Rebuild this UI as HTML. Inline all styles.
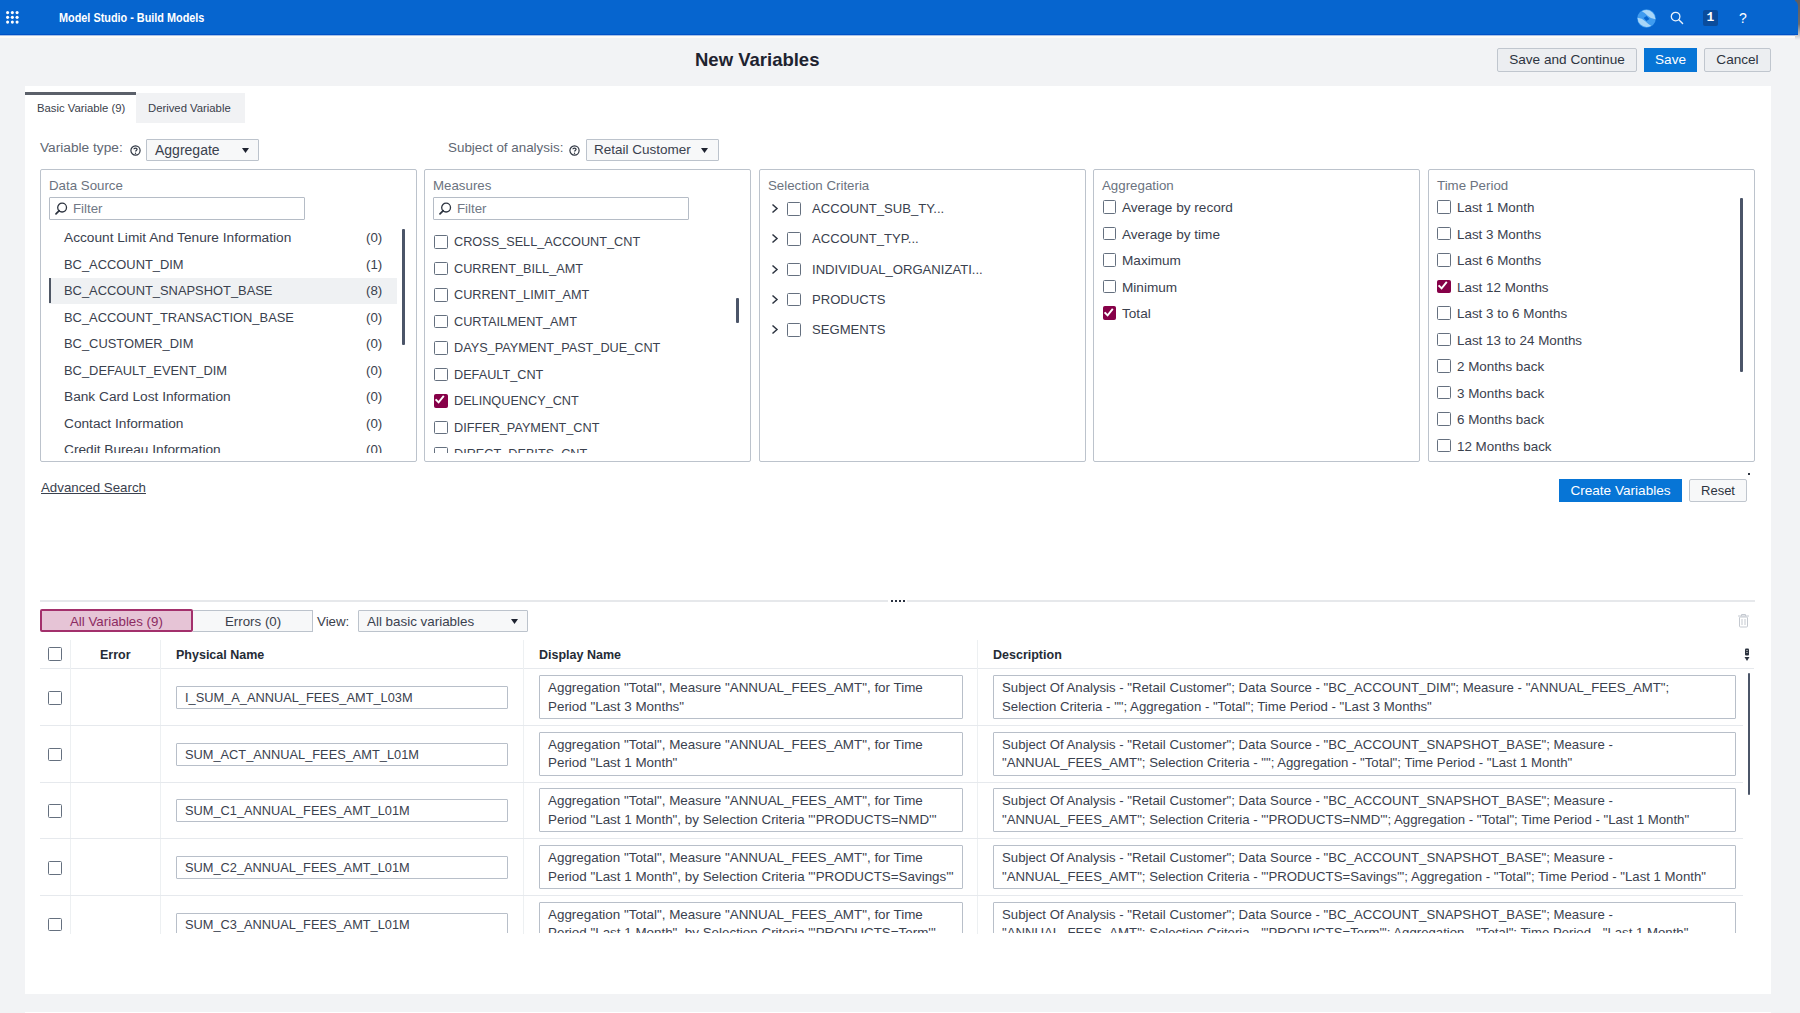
<!DOCTYPE html>
<html><head><meta charset="utf-8"><style>
*{box-sizing:border-box;margin:0;padding:0}
html,body{width:1800px;height:1013px;overflow:hidden}
body{position:relative;background:#f2f3f5;font-family:"Liberation Sans",sans-serif;font-size:13.3px;color:#3a414e}
.a{position:absolute;white-space:nowrap}
.btn{position:absolute;height:24px;border:1px solid #c0c6ce;background:#eceef1;border-radius:2px;font-size:13.6px;color:#2d3440;text-align:center;line-height:22px;white-space:nowrap}
.btnp{background:#0775d6;border-color:#0775d6;color:#fff;border-radius:0}
.box{position:absolute;top:169px;height:293px;border:1px solid #bcc3cc;border-radius:2px;background:#fff}
.clip{position:absolute;left:0;top:0;right:0;overflow:hidden}
.lbl{position:absolute;left:8px;top:8px;color:#6b7380;font-size:13.3px;white-space:nowrap}
.flt{position:absolute;left:8px;top:27px;width:256px;height:23px;border:1px solid #b5bcc6;border-radius:1px}
.flt span{position:absolute;left:23px;top:3px;color:#707885}
.cb{position:absolute;width:13.5px;height:13.5px;border:1.5px solid #65707f;border-radius:1.5px;background:#fff}
.cbx{background:#860048;border-color:#860048}
.sel{position:absolute;height:23px;border:1px solid #bcc3cc;background:#f7f8f9;border-radius:1px;white-space:nowrap}
.t{position:absolute;white-space:nowrap}
.inp{position:absolute;border:1px solid #b8bfc9;border-radius:1px;background:#fff;white-space:normal;line-height:18.6px;padding:3px 8px;color:#3a414e}
.hl{position:absolute;background:#e6e9ed}
</style></head><body>
<div class="a" style="left:0;top:0;width:1800px;height:35px;background:#0665cf;border-bottom:1px solid #0052c6"></div>
<div class="a" style="left:0;top:35px;width:1800px;height:1px;background:#a8c2e6"></div>
<div class="a" style="left:0;top:36px;width:1800px;height:1.5px;background:#fdfbf7"></div>
<svg class="a" style="left:6.4px;top:11.2px" width="14" height="14" viewBox="0 0 14 14"><circle cx="1.6" cy="1.6" r="1.55" fill="#fff"/><circle cx="6.35" cy="1.6" r="1.55" fill="#fff"/><circle cx="11.1" cy="1.6" r="1.55" fill="#fff"/><circle cx="1.6" cy="6.35" r="1.55" fill="#fff"/><circle cx="6.35" cy="6.35" r="1.55" fill="#fff"/><circle cx="11.1" cy="6.35" r="1.55" fill="#fff"/><circle cx="1.6" cy="11.1" r="1.55" fill="#fff"/><circle cx="6.35" cy="11.1" r="1.55" fill="#fff"/><circle cx="11.1" cy="11.1" r="1.55" fill="#fff"/></svg>
<div class="a" style="left:59px;top:11px;color:#fff;font-weight:bold;font-size:12px;transform:scaleX(0.905);transform-origin:0 0">Model Studio - Build Models</div>
<svg class="a" style="left:1636.6px;top:8.5px" width="19" height="19" viewBox="0 0 18 18">
<circle cx="9" cy="9" r="8.8" fill="#3f9bef"/>
<path d="M4.6 2.2 Q10 -0.6 14.6 3.2 Q17.6 6 17.4 9.6 Q13.2 9.4 10.4 6.6 Q7.8 3.8 4.6 2.2Z" fill="#a8d6f8"/>
<path d="M13.4 15.8 Q8 18.6 3.4 14.8 Q0.4 12 0.6 8.4 Q4.8 8.6 7.6 11.4 Q10.2 14.2 13.4 15.8Z" fill="#a8d6f8"/>
<path d="M6.2 8.6 L9 6.6 L11.8 9.4 L9 11.4Z" fill="#0665cf"/>
</svg>
<svg class="a" style="left:1670px;top:11px" width="14" height="14" viewBox="0 0 14 14">
<circle cx="5.6" cy="5.6" r="4.3" fill="none" stroke="#e8f1fb" stroke-width="1.3"/>
<path d="M8.8 8.8 L12.6 12.6" stroke="#e8f1fb" stroke-width="1.4" stroke-linecap="round"/></svg>
<div class="a" style="left:1703px;top:10px;width:15px;height:16px;background:#0a4c9c;border-radius:2px;color:#fff;font-family:'Liberation Mono',monospace;font-weight:bold;font-size:13px;line-height:16px;text-align:center">1</div>
<div class="a" style="left:1739px;top:10px;color:#fff;font-size:14px">?</div>
<div class="a" style="left:1795px;top:0;width:5px;height:40px;background:linear-gradient(#5d5d60 0,#6a6a6e 60%,#f2f3f5 100%)"></div>
<div class="a" style="left:1788px;top:0;width:10px;height:35px;background:#0665cf;border-top-right-radius:6px;border-bottom:1px solid #0052c6"></div>
<div class="a" style="left:695px;top:49px;font-size:18.5px;font-weight:bold;color:#1e2330">New Variables</div>
<div class="btn" style="left:1497px;top:48px;width:140px">Save and Continue</div>
<div class="btn btnp" style="left:1644px;top:48px;width:53px">Save</div>
<div class="btn" style="left:1704px;top:48px;width:67px">Cancel</div>
<div class="a" style="left:25px;top:86px;width:1746px;height:908px;background:#fff"></div>
<div class="a" style="left:25px;top:1012px;width:1746px;height:1px;background:#fff"></div>
<div class="a" style="left:25px;top:92px;width:111px;height:3px;background:#5b606a"></div>
<div class="a" style="left:37px;top:102px;font-size:11.3px;color:#3a404b">Basic Variable (9)</div>
<div class="a" style="left:136px;top:93px;width:109px;height:30px;background:#f1f2f4"></div>
<div class="a" style="left:148px;top:102px;font-size:11.3px;color:#3a404b">Derived Variable</div>
<div class="a" style="left:40px;top:140px;font-size:13.7px;color:#5f6773">Variable type:</div>
<svg class="a" style="left:130px;top:144.5px" width="11" height="11" viewBox="0 0 11 11"><circle cx="5.5" cy="5.5" r="4.6" fill="none" stroke="#2d3440" stroke-width="1.2"/><path d="M3.9 4.3 C3.9 2.6,7.1 2.6,7.1 4.3 C7.1 5.4,5.5 5.5,5.5 6.6" fill="none" stroke="#2d3440" stroke-width="1.2"/><circle cx="5.5" cy="8.2" r="0.7" fill="#2d3440"/></svg>
<div class="sel" style="left:146px;top:139px;width:113px;height:22px"><span class="t" style="left:8px;top:2px;font-size:14px">Aggregate</span><svg class="t" style="left:95px;top:8px" width="7" height="5" viewBox="0 0 7 5"><path d="M0 0H7L3.5 5Z" fill="#1e2330"/></svg></div>
<div class="a" style="left:448px;top:140px;font-size:13.4px;color:#5f6773">Subject of analysis:</div>
<svg class="a" style="left:569px;top:144.5px" width="11" height="11" viewBox="0 0 11 11"><circle cx="5.5" cy="5.5" r="4.6" fill="none" stroke="#2d3440" stroke-width="1.2"/><path d="M3.9 4.3 C3.9 2.6,7.1 2.6,7.1 4.3 C7.1 5.4,5.5 5.5,5.5 6.6" fill="none" stroke="#2d3440" stroke-width="1.2"/><circle cx="5.5" cy="8.2" r="0.7" fill="#2d3440"/></svg>
<div class="sel" style="left:586px;top:139px;width:133px;height:22px"><span class="t" style="left:7px;top:2px;font-size:13.5px">Retail Customer</span><svg class="t" style="left:114px;top:8px" width="7" height="5" viewBox="0 0 7 5"><path d="M0 0H7L3.5 5Z" fill="#1e2330"/></svg></div>
<div class="box" style="left:40px;width:377px">
<div class="lbl">Data Source</div>
<div class="flt"><span>Filter</span></div>
<svg class="a" style="left:14px;top:32px" width="14" height="14" viewBox="0 0 14 14"><circle cx="7.1" cy="5.6" r="4.4" fill="none" stroke="#2d3440" stroke-width="1.3"/><path d="M4.2 8.6 L1 11.9" stroke="#2d3440" stroke-width="1.7" stroke-linecap="round"/></svg>
<div class="clip" style="top:52px;height:231px;">
<div class="t" style="left:23px;top:8.0px;font-size:13.7px">Account Limit And Tenure Information</div>
<div class="t" style="left:325px;top:8.0px">(0)</div>
<div class="t" style="left:23px;top:34.5px;font-size:12.9px">BC_ACCOUNT_DIM</div>
<div class="t" style="left:325px;top:34.5px">(1)</div>
<div class="a" style="left:8px;top:56.0px;width:348px;height:26px;background:#eff1f3"></div>
<div class="a" style="left:8px;top:56.0px;width:1.6px;height:25px;background:#4f5765"></div>
<div class="t" style="left:23px;top:61.0px;font-size:12.9px">BC_ACCOUNT_SNAPSHOT_BASE</div>
<div class="t" style="left:325px;top:61.0px">(8)</div>
<div class="t" style="left:23px;top:87.5px;font-size:12.9px">BC_ACCOUNT_TRANSACTION_BASE</div>
<div class="t" style="left:325px;top:87.5px">(0)</div>
<div class="t" style="left:23px;top:114.0px;font-size:12.9px">BC_CUSTOMER_DIM</div>
<div class="t" style="left:325px;top:114.0px">(0)</div>
<div class="t" style="left:23px;top:140.5px;font-size:12.9px">BC_DEFAULT_EVENT_DIM</div>
<div class="t" style="left:325px;top:140.5px">(0)</div>
<div class="t" style="left:23px;top:167.0px;font-size:13.7px">Bank Card Lost Information</div>
<div class="t" style="left:325px;top:167.0px">(0)</div>
<div class="t" style="left:23px;top:193.5px;font-size:13.7px">Contact Information</div>
<div class="t" style="left:325px;top:193.5px">(0)</div>
<div class="t" style="left:23px;top:220.0px;font-size:13.7px">Credit Bureau Information</div>
<div class="t" style="left:325px;top:220.0px">(0)</div>
</div>
<div class="a" style="left:361px;top:59px;width:2.6px;height:116px;background:#4b5568;border-radius:1px"></div>
</div>
<div class="box" style="left:424px;width:327px">
<div class="lbl">Measures</div>
<div class="flt"><span>Filter</span></div>
<svg class="a" style="left:14px;top:32px" width="14" height="14" viewBox="0 0 14 14"><circle cx="7.1" cy="5.6" r="4.4" fill="none" stroke="#2d3440" stroke-width="1.3"/><path d="M4.2 8.6 L1 11.9" stroke="#2d3440" stroke-width="1.7" stroke-linecap="round"/></svg>
<div class="clip" style="top:52px;height:231px;">
<div class="cb" style="left:9px;top:13.0px"></div>
<div class="t" style="left:29px;top:13.0px;font-size:12.7px">CROSS_SELL_ACCOUNT_CNT</div>
<div class="cb" style="left:9px;top:39.5px"></div>
<div class="t" style="left:29px;top:39.5px;font-size:12.7px">CURRENT_BILL_AMT</div>
<div class="cb" style="left:9px;top:66.0px"></div>
<div class="t" style="left:29px;top:66.0px;font-size:12.7px">CURRENT_LIMIT_AMT</div>
<div class="cb" style="left:9px;top:92.5px"></div>
<div class="t" style="left:29px;top:92.5px;font-size:12.7px">CURTAILMENT_AMT</div>
<div class="cb" style="left:9px;top:119.0px"></div>
<div class="t" style="left:29px;top:119.0px;font-size:12.7px">DAYS_PAYMENT_PAST_DUE_CNT</div>
<div class="cb" style="left:9px;top:145.5px"></div>
<div class="t" style="left:29px;top:145.5px;font-size:12.7px">DEFAULT_CNT</div>
<div class="cb cbx" style="left:9px;top:172.0px"><svg width="13.5" height="13.5" viewBox="0 0 13.5 13.5" style="position:absolute;left:-1.6px;top:-1.6px"><path d="M3.2 7.0 L5.6 9.4 L10.2 3.6" fill="none" stroke="#fff" stroke-width="1.9" stroke-linecap="square"/></svg></div>
<div class="t" style="left:29px;top:172.0px;font-size:12.7px">DELINQUENCY_CNT</div>
<div class="cb" style="left:9px;top:198.5px"></div>
<div class="t" style="left:29px;top:198.5px;font-size:12.7px">DIFFER_PAYMENT_CNT</div>
<div class="cb" style="left:9px;top:225.0px"></div>
<div class="t" style="left:29px;top:225.0px;font-size:12.7px">DIRECT_DEBITS_CNT</div>
</div>
<div class="a" style="left:311px;top:128px;width:3px;height:25px;background:#4b5568;border-radius:1px"></div>
</div>
<div class="box" style="left:759px;width:327px">
<div class="lbl">Selection Criteria</div>
<svg class="a" style="left:11px;top:33.2px" width="8" height="11" viewBox="0 0 8 11"><path d="M1.5 1.5 L6 5.5 L1.5 9.5" fill="none" stroke="#2d3440" stroke-width="1.5"/></svg>
<div class="cb" style="left:27px;top:32.2px"></div>
<div class="t" style="left:52px;top:31.200000000000003px;font-size:13.1px">ACCOUNT_SUB_TY...</div>
<svg class="a" style="left:11px;top:63.400000000000006px" width="8" height="11" viewBox="0 0 8 11"><path d="M1.5 1.5 L6 5.5 L1.5 9.5" fill="none" stroke="#2d3440" stroke-width="1.5"/></svg>
<div class="cb" style="left:27px;top:62.400000000000006px"></div>
<div class="t" style="left:52px;top:61.400000000000006px;font-size:13.1px">ACCOUNT_TYP...</div>
<svg class="a" style="left:11px;top:93.6px" width="8" height="11" viewBox="0 0 8 11"><path d="M1.5 1.5 L6 5.5 L1.5 9.5" fill="none" stroke="#2d3440" stroke-width="1.5"/></svg>
<div class="cb" style="left:27px;top:92.6px"></div>
<div class="t" style="left:52px;top:91.6px;font-size:13.1px">INDIVIDUAL_ORGANIZATI...</div>
<svg class="a" style="left:11px;top:123.8px" width="8" height="11" viewBox="0 0 8 11"><path d="M1.5 1.5 L6 5.5 L1.5 9.5" fill="none" stroke="#2d3440" stroke-width="1.5"/></svg>
<div class="cb" style="left:27px;top:122.8px"></div>
<div class="t" style="left:52px;top:121.8px;font-size:13.1px">PRODUCTS</div>
<svg class="a" style="left:11px;top:154.0px" width="8" height="11" viewBox="0 0 8 11"><path d="M1.5 1.5 L6 5.5 L1.5 9.5" fill="none" stroke="#2d3440" stroke-width="1.5"/></svg>
<div class="cb" style="left:27px;top:153.0px"></div>
<div class="t" style="left:52px;top:152.0px;font-size:13.1px">SEGMENTS</div>
</div>
<div class="box" style="left:1093px;width:327px">
<div class="lbl">Aggregation</div>
<div class="cb" style="left:8.6px;top:30.2px"></div>
<div class="t" style="left:28px;top:30.0px;font-size:13.6px">Average by record</div>
<div class="cb" style="left:8.6px;top:56.7px"></div>
<div class="t" style="left:28px;top:56.5px;font-size:13.6px">Average by time</div>
<div class="cb" style="left:8.6px;top:83.2px"></div>
<div class="t" style="left:28px;top:83.0px;font-size:13.6px">Maximum</div>
<div class="cb" style="left:8.6px;top:109.7px"></div>
<div class="t" style="left:28px;top:109.5px;font-size:13.6px">Minimum</div>
<div class="cb cbx" style="left:8.6px;top:136.2px"><svg width="13.5" height="13.5" viewBox="0 0 13.5 13.5" style="position:absolute;left:-1.6px;top:-1.6px"><path d="M3.2 7.0 L5.6 9.4 L10.2 3.6" fill="none" stroke="#fff" stroke-width="1.9" stroke-linecap="square"/></svg></div>
<div class="t" style="left:28px;top:136.0px;font-size:13.6px">Total</div>
</div>
<div class="box" style="left:1428px;width:327px">
<div class="lbl">Time Period</div>
<div class="cb" style="left:8px;top:30.2px"></div>
<div class="t" style="left:28px;top:30.0px;font-size:13.4px">Last 1 Month</div>
<div class="cb" style="left:8px;top:56.7px"></div>
<div class="t" style="left:28px;top:56.5px;font-size:13.4px">Last 3 Months</div>
<div class="cb" style="left:8px;top:83.2px"></div>
<div class="t" style="left:28px;top:83.0px;font-size:13.4px">Last 6 Months</div>
<div class="cb cbx" style="left:8px;top:109.7px"><svg width="13.5" height="13.5" viewBox="0 0 13.5 13.5" style="position:absolute;left:-1.6px;top:-1.6px"><path d="M3.2 7.0 L5.6 9.4 L10.2 3.6" fill="none" stroke="#fff" stroke-width="1.9" stroke-linecap="square"/></svg></div>
<div class="t" style="left:28px;top:109.5px;font-size:13.4px">Last 12 Months</div>
<div class="cb" style="left:8px;top:136.2px"></div>
<div class="t" style="left:28px;top:136.0px;font-size:13.4px">Last 3 to 6 Months</div>
<div class="cb" style="left:8px;top:162.7px"></div>
<div class="t" style="left:28px;top:162.5px;font-size:13.4px">Last 13 to 24 Months</div>
<div class="cb" style="left:8px;top:189.2px"></div>
<div class="t" style="left:28px;top:189.0px;font-size:13.4px">2 Months back</div>
<div class="cb" style="left:8px;top:215.7px"></div>
<div class="t" style="left:28px;top:215.5px;font-size:13.4px">3 Months back</div>
<div class="cb" style="left:8px;top:242.2px"></div>
<div class="t" style="left:28px;top:242.0px;font-size:13.4px">6 Months back</div>
<div class="cb" style="left:8px;top:268.7px"></div>
<div class="t" style="left:28px;top:268.5px;font-size:13.4px">12 Months back</div>
<div class="a" style="left:311px;top:28px;width:3px;height:174px;background:#4b5568;border-radius:1px"></div>
</div>
<div class="a" style="left:41px;top:480px;font-size:13.3px;text-decoration:underline;color:#3a414e">Advanced Search</div>
<div class="btn btnp" style="left:1559px;top:479px;width:123px;height:23px;line-height:22px">Create Variables</div>
<div class="btn" style="left:1689px;top:479px;width:58px;height:23px;background:#f7f8f9;font-size:13px;line-height:22px">Reset</div>
<div class="a" style="left:1748px;top:473px;width:2px;height:2px;background:#2d3440"></div>
<div class="a" style="left:40px;top:600px;width:1715px;height:2px;background:#e6e8eb"></div>
<div class="a" style="left:888px;top:599px;width:19px;height:4px;background:#fff"></div>
<div class="a" style="left:891px;top:600px;width:2px;height:2px;background:#2a3140"></div>
<div class="a" style="left:895px;top:600px;width:2px;height:2px;background:#2a3140"></div>
<div class="a" style="left:899px;top:600px;width:2px;height:2px;background:#2a3140"></div>
<div class="a" style="left:903px;top:600px;width:2px;height:2px;background:#2a3140"></div>
<div class="a" style="left:40px;top:609px;width:153px;height:23px;background:#e6c4d6;border:2px solid #a3306c;border-radius:2px"></div>
<div class="a" style="left:70px;top:613.5px;font-size:13.3px;color:#8c2b61">All Variables (9)</div>
<div class="a" style="left:193px;top:610px;width:120px;height:22px;background:#f7f8f9;border:1px solid #bcc3cc;border-left:none"></div>
<div class="a" style="left:225px;top:613.5px;font-size:13.3px;color:#3a404b">Errors (0)</div>
<div class="a" style="left:317px;top:613.5px;font-size:13.3px;color:#3a404b">View:</div>
<div class="sel" style="left:358px;top:610px;width:170px;height:22px"><span class="t" style="left:8px;top:3px;font-size:13.4px">All basic variables</span><svg class="t" style="left:152px;top:8px" width="7" height="5" viewBox="0 0 7 5"><path d="M0 0H7L3.5 5Z" fill="#1e2330"/></svg></div>
<svg class="a" style="left:1737px;top:613px" width="13" height="15" viewBox="0 0 13 15">
<path d="M1 3 H12 M4.5 3 V1.5 H8.5 V3" fill="none" stroke="#c4c9d0" stroke-width="1"/>
<rect x="2.5" y="4" width="8" height="10" rx="1" fill="none" stroke="#c4c9d0" stroke-width="1"/>
<path d="M5 6 V12 M8 6 V12" stroke="#c4c9d0" stroke-width="1"/></svg>
<div class="hl" style="left:40px;top:668px;width:1714px;height:1px"></div>
<div class="hl" style="left:70px;top:640px;width:1px;height:294px;background:#edf0f2"></div>
<div class="hl" style="left:160px;top:640px;width:1px;height:294px;background:#edf0f2"></div>
<div class="hl" style="left:523px;top:640px;width:1px;height:294px;background:#edf0f2"></div>
<div class="hl" style="left:977px;top:640px;width:1px;height:294px;background:#edf0f2"></div>
<div class="cb" style="left:48px;top:647px"></div>
<div class="a" style="left:100px;top:647.5px;font-weight:bold;font-size:12.5px;color:#252b36">Error</div>
<div class="a" style="left:176px;top:647.5px;font-weight:bold;font-size:12.5px;color:#252b36">Physical Name</div>
<div class="a" style="left:539px;top:647.5px;font-weight:bold;font-size:12.5px;color:#252b36">Display Name</div>
<div class="a" style="left:993px;top:647.5px;font-weight:bold;font-size:12.5px;color:#252b36">Description</div>
<svg class="a" style="left:1744px;top:648px" width="6" height="14" viewBox="0 0 6 14">
<rect x="1" y="0.5" width="4" height="7" rx="1" fill="#2d3440"/><path d="M2 2.5 H4 M2 4.5 H4" stroke="#ccc" stroke-width="0.6"/>
<path d="M0.5 9 L5.5 9 L3 13Z" fill="#2d3440"/></svg>
<div class="a" style="left:40px;top:669px;width:1715px;height:264px;overflow:hidden">
<div class="hl" style="left:0;top:56.0px;width:1703px;height:1px"></div>
<div class="cb" style="left:8px;top:22.0px"></div>
<div class="inp" style="left:136px;top:17.0px;width:332px;height:23px;padding:2px 8px;font-size:12.8px;white-space:nowrap">I_SUM_A_ANNUAL_FEES_AMT_L03M</div>
<div class="inp" style="left:499px;top:6.0px;width:424px;height:44px;font-size:13.4px">Aggregation &quot;Total&quot;, Measure &quot;ANNUAL_FEES_AMT&quot;, for Time<br>Period &quot;Last 3 Months&quot;</div>
<div class="inp" style="left:953px;top:6.0px;width:743px;height:44px;font-size:13.2px;white-space:nowrap">Subject Of Analysis - &quot;Retail Customer&quot;; Data Source - &quot;BC_ACCOUNT_DIM&quot;; Measure - &quot;ANNUAL_FEES_AMT&quot;;<br>Selection Criteria - &quot;&quot;; Aggregation - &quot;Total&quot;; Time Period - &quot;Last 3 Months&quot;</div>
<div class="hl" style="left:0;top:112.7px;width:1703px;height:1px"></div>
<div class="cb" style="left:8px;top:78.7px"></div>
<div class="inp" style="left:136px;top:73.7px;width:332px;height:23px;padding:2px 8px;font-size:12.8px;white-space:nowrap">SUM_ACT_ANNUAL_FEES_AMT_L01M</div>
<div class="inp" style="left:499px;top:62.7px;width:424px;height:44px;font-size:13.4px">Aggregation &quot;Total&quot;, Measure &quot;ANNUAL_FEES_AMT&quot;, for Time<br>Period &quot;Last 1 Month&quot;</div>
<div class="inp" style="left:953px;top:62.7px;width:743px;height:44px;font-size:13.2px;white-space:nowrap">Subject Of Analysis - &quot;Retail Customer&quot;; Data Source - &quot;BC_ACCOUNT_SNAPSHOT_BASE&quot;; Measure -<br>&quot;ANNUAL_FEES_AMT&quot;; Selection Criteria - &quot;&quot;; Aggregation - &quot;Total&quot;; Time Period - &quot;Last 1 Month&quot;</div>
<div class="hl" style="left:0;top:169.4px;width:1703px;height:1px"></div>
<div class="cb" style="left:8px;top:135.4px"></div>
<div class="inp" style="left:136px;top:130.4px;width:332px;height:23px;padding:2px 8px;font-size:12.8px;white-space:nowrap">SUM_C1_ANNUAL_FEES_AMT_L01M</div>
<div class="inp" style="left:499px;top:119.4px;width:424px;height:44px;font-size:13.4px">Aggregation &quot;Total&quot;, Measure &quot;ANNUAL_FEES_AMT&quot;, for Time<br>Period &quot;Last 1 Month&quot;, by Selection Criteria &quot;&#x27;PRODUCTS=NMD&#x27;&quot;</div>
<div class="inp" style="left:953px;top:119.4px;width:743px;height:44px;font-size:13.2px;white-space:nowrap">Subject Of Analysis - &quot;Retail Customer&quot;; Data Source - &quot;BC_ACCOUNT_SNAPSHOT_BASE&quot;; Measure -<br>&quot;ANNUAL_FEES_AMT&quot;; Selection Criteria - &quot;'PRODUCTS=NMD'&quot;; Aggregation - &quot;Total&quot;; Time Period - &quot;Last 1 Month&quot;</div>
<div class="hl" style="left:0;top:226.10000000000002px;width:1703px;height:1px"></div>
<div class="cb" style="left:8px;top:192.10000000000002px"></div>
<div class="inp" style="left:136px;top:187.10000000000002px;width:332px;height:23px;padding:2px 8px;font-size:12.8px;white-space:nowrap">SUM_C2_ANNUAL_FEES_AMT_L01M</div>
<div class="inp" style="left:499px;top:176.10000000000002px;width:424px;height:44px;font-size:13.4px">Aggregation &quot;Total&quot;, Measure &quot;ANNUAL_FEES_AMT&quot;, for Time<br>Period &quot;Last 1 Month&quot;, by Selection Criteria &quot;&#x27;PRODUCTS=Savings&#x27;&quot;</div>
<div class="inp" style="left:953px;top:176.10000000000002px;width:743px;height:44px;font-size:13.2px;white-space:nowrap">Subject Of Analysis - &quot;Retail Customer&quot;; Data Source - &quot;BC_ACCOUNT_SNAPSHOT_BASE&quot;; Measure -<br>&quot;ANNUAL_FEES_AMT&quot;; Selection Criteria - &quot;'PRODUCTS=Savings'&quot;; Aggregation - &quot;Total&quot;; Time Period - &quot;Last 1 Month&quot;</div>
<div class="cb" style="left:8px;top:248.8px"></div>
<div class="inp" style="left:136px;top:243.8px;width:332px;height:23px;padding:2px 8px;font-size:12.8px;white-space:nowrap">SUM_C3_ANNUAL_FEES_AMT_L01M</div>
<div class="inp" style="left:499px;top:232.8px;width:424px;height:44px;font-size:13.4px">Aggregation &quot;Total&quot;, Measure &quot;ANNUAL_FEES_AMT&quot;, for Time<br>Period &quot;Last 1 Month&quot;, by Selection Criteria &quot;&#x27;PRODUCTS=Term&#x27;&quot;</div>
<div class="inp" style="left:953px;top:232.8px;width:743px;height:44px;font-size:13.2px;white-space:nowrap">Subject Of Analysis - &quot;Retail Customer&quot;; Data Source - &quot;BC_ACCOUNT_SNAPSHOT_BASE&quot;; Measure -<br>&quot;ANNUAL_FEES_AMT&quot;; Selection Criteria - &quot;'PRODUCTS=Term'&quot;; Aggregation - &quot;Total&quot;; Time Period - &quot;Last 1 Month&quot;</div>
</div>
<div class="a" style="left:1748px;top:673px;width:2.4px;height:122px;background:#4b5568;border-radius:1px"></div>
</body></html>
